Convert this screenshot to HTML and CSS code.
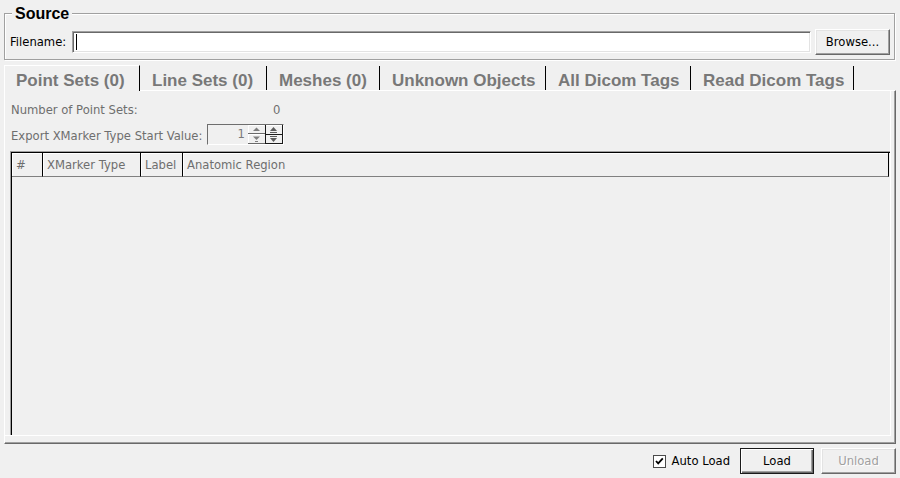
FILE: index.html
```html
<!DOCTYPE html>
<html>
<head>
<meta charset="utf-8">
<link rel="stylesheet" href="styles.css">
</head>
<body>
<div class="group">
  <span class="group-title">Source</span>
  <div class="file-row">
    <span class="file-label">Filename:</span>
    <div class="text-input"><span class="caret"></span></div>
    <button class="btn btn-browse">Browse...</button>
  </div>
</div>
<div class="tabs">
  <div class="tab tab-active">Point Sets (0)</div>
  <div class="tab">Line Sets (0)</div>
  <div class="tab">Meshes (0)</div>
  <div class="tab">Unknown Objects</div>
  <div class="tab">All Dicom Tags</div>
  <div class="tab">Read Dicom Tags</div>
</div>
<div class="panel">
  <div class="page">
    <div class="info-row"><span class="info-label">Number of Point Sets:</span><span class="info-value">0</span></div>
    <div class="spin-row">
      <span class="spin-label">Export XMarker Type Start Value:</span>
      <div class="spinbox">
        <span class="spin-value">1</span>
        <svg class="spin-buttons" width="35" height="19" viewBox="0 0 35 19">
          <rect x="0" y="0" width="17" height="19" fill="#f0f0f0"/>
          <rect x="0" y="0" width="16" height="1" fill="#fff"/>
          <rect x="0" y="0" width="1" height="8" fill="#fff"/>
          <rect x="0" y="8" width="17" height="1" fill="#696969"/>
          <rect x="0" y="9" width="16" height="1" fill="#fff"/>
          <rect x="0" y="9" width="1" height="9" fill="#fff"/>
          <rect x="0" y="18" width="17" height="1" fill="#696969"/>
          <polygon points="5,6 12,6 8.5,2.5" fill="#7e7e7e"/>
          <polygon points="5,11.5 12,11.5 8.5,15" fill="#7e7e7e"/>
          <rect x="7" y="16" width="3" height="1" fill="#7e7e7e"/>
          <rect x="17" y="0" width="18" height="19" fill="#f0f0f0"/>
          <rect x="17" y="0" width="1" height="19" fill="#1a1a1a"/>
          <rect x="34" y="0" width="1" height="19" fill="#1a1a1a"/>
          <rect x="17" y="18" width="18" height="1" fill="#1a1a1a"/>
          <rect x="17" y="9" width="18" height="1" fill="#1a1a1a"/>
          <rect x="18" y="0" width="16" height="1" fill="#fff"/>
          <polygon points="22,6 29,6 25.5,2" fill="#5a5a5a"/>
          <rect x="22" y="7" width="7" height="1" fill="#5a5a5a"/>
          <rect x="22" y="11" width="7" height="1" fill="#5a5a5a"/>
          <polygon points="22,13 29,13 25.5,17" fill="#5a5a5a"/>
        </svg>
      </div>
    </div>
    <div class="table">
      <div class="thead">
        <div class="th th-num">#</div>
        <div class="th th-type">XMarker Type</div>
        <div class="th th-label">Label</div>
        <div class="th th-region">Anatomic Region</div>
      </div>
      <div class="tbody"></div>
    </div>
  </div>
</div>
<div class="footer">
  <label class="check">
    <svg class="checkbox" width="13" height="13" viewBox="0 0 13 13">
      <rect x="0" y="0" width="13" height="13" fill="#fff"/>
      <rect x="0.5" y="0.5" width="12" height="12" fill="none" stroke="#4a4a4a"/>
      <path d="M3 6 L5.2 8.4 L9.8 3.4" fill="none" stroke="#000" stroke-width="1.8"/>
    </svg>
    <span>Auto Load</span>
  </label>
  <button class="btn btn-load">Load</button>
  <button class="btn btn-disabled">Unload</button>
</div>
</body>
</html>
```
FILE: styles.css
```css
html, body {
  margin: 0;
  padding: 0;
}
body {
  width: 900px;
  height: 478px;
  overflow: hidden;
  background: #f0f0f0;
  font-family: "DejaVu Sans", sans-serif;
  font-size: 11.6px;
  color: #000;
  display: flex;
  flex-direction: column;
}

/* Source group */
.group {
  position: relative;
  margin: 13px 5px 0 4px;
  border: 1px solid #a0a0a0;
  box-shadow: inset 1px 1px 0 #fff, 1px 1px 0 #fff;
  padding: 15px 4px 4px 5px;
}
.group-title {
  position: absolute;
  top: -10px;
  left: 7px;
  padding: 0 3px;
  background: #f0f0f0;
  font: bold 16px/20px "Liberation Sans", Arial, sans-serif;
}
.file-row {
  display: flex;
  align-items: center;
  height: 26px;
}
.file-label {
  width: 62px;
  flex: none;
}
.text-input {
  flex: 1;
  height: 22px;
  box-sizing: border-box;
  background: #fff;
  border: 1px solid;
  border-color: #a0a0a0 #fff #fff #a0a0a0;
  box-shadow: inset 1px 1px 0 #696969, inset -1px -1px 0 #e3e3e3;
  margin-right: 4px;
  display: flex;
  align-items: center;
  padding-left: 3px;
}
.caret {
  width: 1px;
  height: 16px;
  background: #000;
}

/* Buttons */
.btn {
  font: inherit;
  font-size: 11.6px;
  height: 26px;
  width: 75px;
  flex: none;
  box-sizing: border-box;
  background: #f0f0f0;
  border: 1px solid;
  border-color: #fff #696969 #696969 #fff;
  box-shadow: inset -1px -1px 0 #a0a0a0, inset 1px 1px 0 #e3e3e3;
  padding: 0;
  color: #000;
}
.btn-load {
  width: 74px;
  border-color: #1a1a1a;
  box-shadow: inset 1px 1px 0 #fff, inset -1px -1px 0 #696969, inset -2px -2px 0 #a0a0a0;
}
.btn-disabled {
  color: #a0a0a0;
  text-shadow: 1px 1px 0 #fff;
}

/* Tabs */
.tabs {
  display: flex;
  align-items: flex-end;
  margin: 5px 0 0 4px;
  height: 25px;
}
.tab {
  box-sizing: border-box;
  height: 24px;
  padding: 5px 0 0 12px;
  font: bold 17px/19px "Liberation Sans", Arial, sans-serif;
  color: #787878;
  border-right: 1px solid #000;
  white-space: nowrap;
  overflow: hidden;
  flex: none;
}
.tab-active {
  position: relative;
  height: 26px;
  margin-bottom: -1px;
  padding-left: 11px;
  border-top: 1px solid #fff;
  border-left: 1px solid #fff;
  background: #f0f0f0;
  width: 136px;
}
.tab:nth-child(2) { width: 127px; }
.tab:nth-child(3) { width: 113px; }
.tab:nth-child(4) { width: 166px; }
.tab:nth-child(5) { width: 145px; }
.tab:nth-child(6) { width: 163px; }

/* Panel */
.panel {
  margin: 0 4px;
  height: 354px;
  box-sizing: border-box;
  border: 1px solid;
  border-color: #fff #696969 #696969 #fff;
  box-shadow: inset -1px -1px 0 #a0a0a0;
  padding: 0 4px 7px 0;
  display: flex;
}
.page {
  flex: 1;
  display: flex;
  flex-direction: column;
  box-sizing: border-box;
  border-right: 1px solid #fff;
  border-bottom: 1px solid #fff;
  padding: 9px 0 0 5px;
}
.info-row {
  display: flex;
  height: 20px;
  line-height: 20px;
  color: #6e6e6e;
  padding-left: 1px;
}
.info-label {
  width: 262px;
}
.spin-row {
  display: flex;
  align-items: flex-start;
  margin-top: 4px;
  padding-left: 1px;
}
.spin-label {
  width: 196px;
  line-height: 21px;
  padding-top: 2px;
  color: #6e6e6e;
  white-space: nowrap;
}
.spinbox {
  width: 77px;
  height: 21px;
  box-sizing: border-box;
  border: 1px solid;
  border-color: #6e6e6e #fff #fff #6e6e6e;
  display: flex;
}
.spin-value {
  width: 40px;
  box-sizing: border-box;
  text-align: right;
  padding-right: 3px;
  line-height: 19px;
  color: #7a7a7a;
}
.spin-buttons {
  display: block;
}

/* Table */
.table {
  flex: 1;
  margin-top: 4px;
  border-top: 1px solid #a0a0a0;
  border-left: 1px solid #a0a0a0;
  box-shadow: inset 1px 1px 0 #000;
  padding: 1px 0 0 1px;
  display: flex;
  flex-direction: column;
}
.thead {
  display: flex;
  height: 24px;
}
.th {
  box-sizing: border-box;
  border-right: 1px solid #000;
  border-bottom: 1px solid #808080;
  padding: 2px 0 0 4px;
  line-height: 21px;
  color: #6e6e6e;
  box-shadow: inset 1px 1px 0 #fff;
  white-space: nowrap;
}
.th-num { width: 31px; }
.th-type { width: 98px; }
.th-label { width: 42px; }
.th-region { width: 706px; }
.tbody {
  flex: 1;
}

/* Footer */
.footer {
  display: flex;
  align-items: center;
  justify-content: flex-end;
  padding: 4px 4px 0 0;
  gap: 7px;
}
.check {
  display: flex;
  align-items: center;
  gap: 6px;
  margin-right: 3px;
}
.checkbox {
  display: block;
}
```
